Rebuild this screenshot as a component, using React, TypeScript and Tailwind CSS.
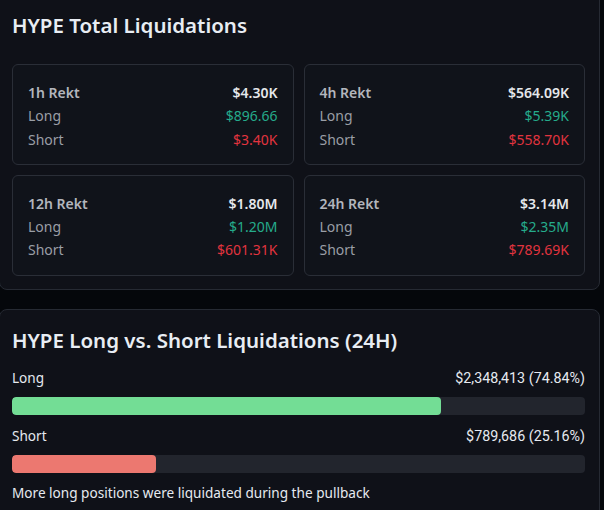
import React from 'react';

type Window = {
  label: string;
  total: string;
  long: string;
  short: string;
};

const windows: Window[] = [
  { label: '1h Rekt', total: '$4.30K', long: '$896.66', short: '$3.40K' },
  { label: '4h Rekt', total: '$564.09K', long: '$5.39K', short: '$558.70K' },
  { label: '12h Rekt', total: '$1.80M', long: '$1.20M', short: '$601.31K' },
  { label: '24h Rekt', total: '$3.14M', long: '$2.35M', short: '$789.69K' },
];

const split = [
  { side: 'Long', amount: '$2,348,413', pct: 74.84, bar: 'bg-[#73dd95]' },
  { side: 'Short', amount: '$789,686', pct: 25.16, bar: 'bg-[#ec7870]' },
];

const RektCard: React.FC<{ w: Window }> = ({ w }) => (
  <div className="rounded-md border border-[#2a2e37] bg-[#10131a] px-[15px] pt-[16px] pb-[13px] text-[14px] leading-[23.3px]">
    <div className="flex justify-between font-semibold">
      <span className="text-[#b3b6bd]">{w.label}</span>
      <span className="text-[#e6e8ec]">{w.total}</span>
    </div>
    <div className="flex justify-between">
      <span className="text-[#9a9ea6]">Long</span>
      <span className="text-[#25ab8b]">{w.long}</span>
    </div>
    <div className="flex justify-between">
      <span className="text-[#9a9ea6]">Short</span>
      <span className="text-[#e2343f]">{w.short}</span>
    </div>
  </div>
);

export default function App() {
  return (
    <div
      className="h-[510px] w-[604px] overflow-hidden bg-[#05070b]"
      style={{ fontFamily: '"Noto Sans", sans-serif' }}
    >
      {/* totals panel */}
      <div className="-ml-px -mt-[12px] w-[601px] rounded-lg border border-[#262a33] bg-[#0f1118] pt-[21px] pr-[14px] pb-[13px] pl-[12px]">
        <h2 className="text-[20.5px] font-semibold leading-[30px] text-[#e8edf3]">HYPE Total Liquidations</h2>
        <div className="mt-[24px] grid grid-cols-2 gap-[10px]">
          {windows.map((w) => (
            <RektCard key={w.label} w={w} />
          ))}
        </div>
      </div>

      {/* long vs short panel */}
      <div className="-ml-px mt-[19px] w-[601px] rounded-lg border border-[#262a33] bg-[#0f1118] pt-[15px] pr-[14px] pb-[20px] pl-[12px]">
        <h2 className="text-[20.5px] font-semibold leading-[30px] text-[#e8edf3]">
          HYPE Long vs. Short Liquidations (24H)
        </h2>
        <div className="mt-[13px] flex flex-col gap-[11px]">
          {split.map((s) => (
            <div key={s.side}>
              <div className="flex items-center justify-between text-[13.6px] leading-[20px] text-[#e6eaf0]">
                <span>{s.side}</span>
                <span className="text-[14.3px]" style={{ fontFamily: 'Roboto, sans-serif' }}>
                  {s.amount} ({s.pct.toFixed(2)}%)
                </span>
              </div>
              <div className="mt-[9px] h-[18px] w-full overflow-hidden rounded bg-[#22252d]">
                <div className={`h-full rounded ${s.bar}`} style={{ width: `${s.pct}%` }} />
              </div>
            </div>
          ))}
        </div>
        <p className="mt-[10px] text-[13.6px] leading-[20px] text-[#e6eaf0]">
          More long positions were liquidated during the pullback
        </p>
      </div>
    </div>
  );
}
